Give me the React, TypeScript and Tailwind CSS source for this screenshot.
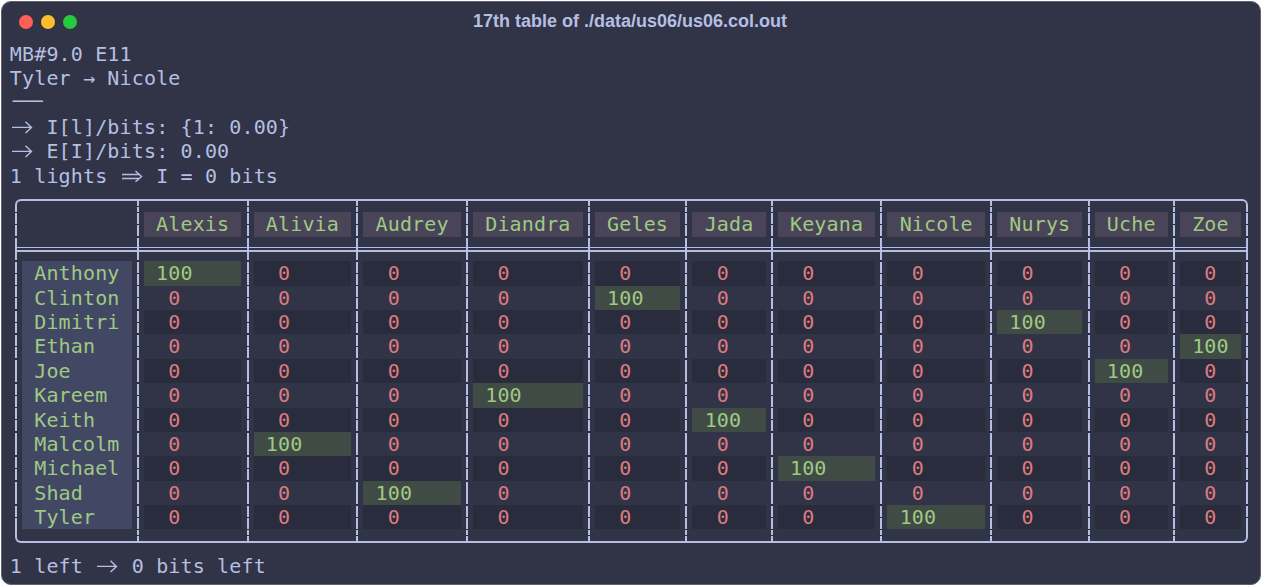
const columns = [
  { name: "Alexis", chars: 8 },
  { name: "Alivia", chars: 8 },
  { name: "Audrey", chars: 8 },
  { name: "Diandra", chars: 9 },
  { name: "Geles", chars: 7 },
  { name: "Jada", chars: 6 },
  { name: "Keyana", chars: 8 },
  { name: "Nicole", chars: 8 },
  { name: "Nurys", chars: 7 },
  { name: "Uche", chars: 6 },
  { name: "Zoe", chars: 5 },
];

const rows = [
  { name: "Anthony", match: "Alexis" },
  { name: "Clinton", match: "Geles" },
  { name: "Dimitri", match: "Nurys" },
  { name: "Ethan", match: "Zoe" },
  { name: "Joe", match: "Uche" },
  { name: "Kareem", match: "Diandra" },
  { name: "Keith", match: "Jada" },
  { name: "Malcolm", match: "Alivia" },
  { name: "Michael", match: "Keyana" },
  { name: "Shad", match: "Audrey" },
  { name: "Tyler", match: "Nicole" },
];

const widths: Record<number, string> = {
  5: "w-[60.95px]",
  6: "w-[73.14px]",
  7: "w-[85.33px]",
  8: "w-[97.52px]",
  9: "w-[109.71px]",
};

function Bar({ part = "full", hidden = false }: { part?: "full" | "top" | "bottom"; hidden?: boolean }) {
  const margin = part === "bottom" ? "mt-[12px]" : part === "top" ? "mb-[12px]" : "";
  return (
    <div className="flex w-[12.19px] shrink-0 justify-center">
      {!hidden && (
        <div className={`flex w-[2px] flex-col gap-[0.7px] bg-[#292c3c] py-[0.9px] ${margin}`}>
          <div className="flex-1 bg-[#b5bfe2]" />
          <div className="flex-1 bg-[#b5bfe2]" />
        </div>
      )}
    </div>
  );
}

function Row({
  first,
  cell,
  part,
  edges = true,
}: {
  first?: React.ReactNode;
  cell?: (name: string, chars: number) => React.ReactNode;
  part?: "full" | "top" | "bottom";
  edges?: boolean;
}) {
  return (
    <div className="flex h-[24.4px]">
      <Bar part={part} hidden={!edges} />
      <div className="w-[109.71px] shrink-0">{first}</div>
      {columns.map((c) => (
        <div key={c.name} className="flex shrink-0">
          <Bar part={part} />
          <div className={`${widths[c.chars]} shrink-0`}>{cell?.(c.name, c.chars)}</div>
        </div>
      ))}
      <Bar part={part} hidden={!edges} />
    </div>
  );
}

function LongArrow({ double = false }: { double?: boolean }) {
  return (
    <svg className="inline-block h-[24.4px] w-[24.38px] align-top" viewBox="0 0 24.38 24.4" fill="none" stroke="#b5bfe2" strokeWidth="1.4">
      {double ? (
        <>
          <path d="M2 10.5H20M2 14.5H20M15.5 7l6 5.4-6 5.4" />
        </>
      ) : (
        <path d="M2 12.4H21.5M15.5 6.8l6 5.6-6 5.6" />
      )}
    </svg>
  );
}

function Table() {
  return (
    <div className="w-[1243.4px]">
      <div className="relative">
        <Row part="bottom" edges={false} />
        <div className="absolute inset-x-[5.2px] top-[11.2px] h-[13.2px] rounded-t-[6px] border-x-2 border-t-2 border-[#b5bfe2]" />
      </div>
      <Row
        cell={(name) => <div className="h-full bg-[#4a4458] pl-[12.19px] text-[#9fc983]">{name}</div>}
      />
      <div className="relative">
        <Row />
        <div className="absolute inset-x-[6px] top-[9.8px] flex h-[5.5px] flex-col justify-between">
          <div className="h-[1.7px] bg-[#b5bfe2]" />
          <div className="h-[1.7px] bg-[#b5bfe2]" />
        </div>
      </div>
      {rows.map((r, i) => (
        <Row
          key={r.name}
          first={<div className="h-full bg-[#424864] pl-[12.19px] text-[#9fc983]">{r.name}</div>}
          cell={(name) => {
            const hit = name === r.match;
            return (
              <div
                className={`h-full ${
                  hit
                    ? "bg-[#414b46] pl-[12.19px] text-[#9fc983]"
                    : `pl-[24.38px] text-[#de7a80] ${i % 2 === 0 ? "bg-[#292c3c]" : ""}`
                }`}
              >
                {hit ? "100" : "0"}
              </div>
            );
          }}
        />
      ))}
      <div className="relative">
        <Row part="top" edges={false} />
        <div className="absolute inset-x-[5.2px] top-0 h-[13.2px] rounded-b-[6px] border-x-2 border-b-2 border-[#b5bfe2]" />
      </div>
    </div>
  );
}

export default function App() {
  return (
    <div className="h-[586px] w-[1263px] overflow-hidden bg-white pl-[1px] pr-[1px] pt-[1px]">
      <div className="h-[584px] w-[1260px] overflow-hidden rounded-[10px] border border-[#5f6172] bg-[#303446]">
        {/* Title bar */}
        <div className="flex h-[39.6px] items-center pl-[17px] pr-[19px]">
          <div className="flex flex-1 gap-2">
            <div className="h-[14px] w-[14px] rounded-full bg-[#ff5f56]" />
            <div className="h-[14px] w-[14px] rounded-full bg-[#ffbd2e]" />
            <div className="h-[14px] w-[14px] rounded-full bg-[#27c93f]" />
          </div>
          <div className="font-['Liberation_Sans',sans-serif] text-[18px] font-bold text-[#b5bfe2]">
            17th table of ./data/us06/us06.col.out
          </div>
          <div className="flex-1" />
        </div>

        {/* Terminal output */}
        <div className="whitespace-pre pl-[7.85px] font-['DejaVu_Sans_Mono',monospace] text-[20px] leading-[24.4px] tracking-[0.15px] text-[#b5bfe2]">
          <div>MB#9.0 E11</div>
          <div>Tyler → Nicole</div>
          <div className="h-[24.4px] pl-[3px] text-[16.6px] tracking-normal">───</div>
          <div>
            <LongArrow /> I[l]/bits: {"{1: 0.00}"}
          </div>
          <div>
            <LongArrow /> E[I]/bits: 0.00
          </div>
          <div>
            1 lights <LongArrow double /> I = 0 bits
          </div>
          <Table />
          <div>
            1 left <LongArrow /> 0 bits left
          </div>
        </div>
      </div>
    </div>
  );
}
